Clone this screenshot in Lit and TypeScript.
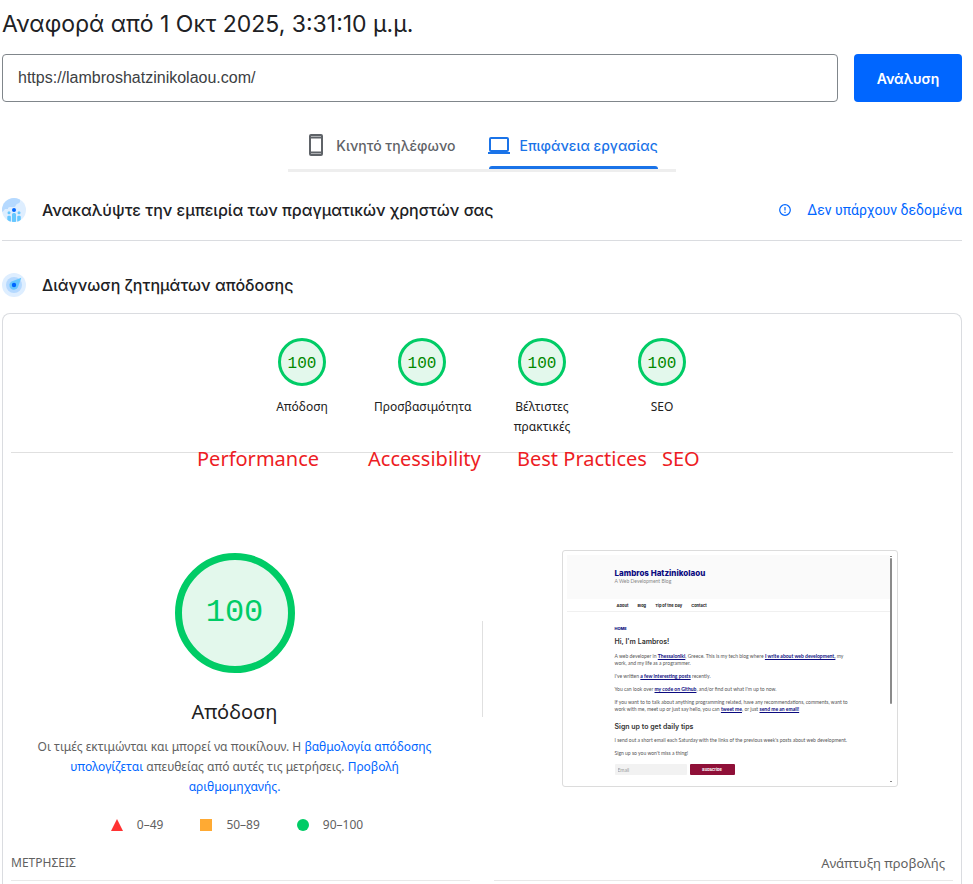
import { LitElement, html, css, svg } from "lit";
import { customElement, property } from "lit/decorators.js";

@customElement("score-gauge")
class ScoreGauge extends LitElement {
  @property({ type: Number }) score = 100;
  @property({ type: Boolean, reflect: true }) large = false;

  static styles = css`
    :host { display: block; width: 48px; height: 48px; }
    :host([large]) { width: 120px; height: 120px; }
    .ring {
      box-sizing: border-box;
      width: 100%;
      height: 100%;
      padding-top: 3px;
      border: 3px solid #0c6;
      border-radius: 50%;
      background: #e3f8ec;
      color: #080;
      font: 16px/20px "Liberation Mono", monospace;
      display: flex;
      align-items: center;
      justify-content: center;
    }
    :host([large]) .ring {
      padding-top: 0;
      border-width: 7px;
      color: #0c6;
      font-size: 32px;
      line-height: 40px;
    }
  `;

  render() {
    return html`<div class="ring">${this.score}</div>`;
  }
}

@customElement("site-preview")
class SitePreview extends LitElement {
  static styles = css`
    :host {
      display: block;
      box-sizing: border-box;
      width: 336px;
      border: 1px solid #dcdcdc;
      border-radius: 3px;
      padding: 4px;
      font: 5px/7px Lato, sans-serif;
      color: #555;
    }
    .screen { display: flex; height: 227px; }
    .page { flex: 1; }
    .top { height: 44px; background: #fafafa; padding-left: 48px; box-sizing: border-box; padding-top: 13px; }
    .site { font: 800 8px/11px Inter, sans-serif; color: #0b0b80; }
    .tag { line-height: 5px; color: #888; }
    nav {
      height: 13px;
      box-sizing: border-box;
      border-bottom: 1px solid #f0f0f0;
      padding-left: 50px;
      display: flex;
      gap: 9px;
      align-items: center;
      font: 700 4px/7px Inter, sans-serif;
    }
    nav a { color: #222; text-decoration: none; }
    main { width: 224px; margin-left: 48px; white-space: nowrap; }
    .crumb { margin-top: 13px; font: 800 4px/7px Inter, sans-serif; color: #0b0b80; }
    h2, h3, p { margin: 0; }
    h2, h3 { font: 600 7px/11px Inter, sans-serif; color: #333; }
    h2 { margin: 4px 0 6px; }
    h3 { margin: 8px 0 5px; }
    p + p { margin-top: 6px; }
    p a { color: #0b0b80; font-weight: 700; text-decoration: underline; }
    form { display: flex; gap: 3px; margin-top: 7px; }
    input, button { box-sizing: border-box; height: 11px; border: 0; margin: 0; font: inherit; border-radius: 1px; }
    input { width: 72px; background: #f2f2f2; padding: 0 3px; }
    input::placeholder { color: #999; }
    button { width: 45px; padding: 0; background: #8f1038; color: #fff; font: 700 4px/7px Inter, sans-serif; }
    .scroll { width: 3px; display: flex; flex-direction: column; align-items: center; gap: 1px; padding-top: 1px; box-sizing: border-box; }
    .arrow { width: 2px; height: 1px; background: #888; }
    .thumb { width: 2px; height: 146px; background: #8b8b8b; border-radius: 1px; margin-bottom: auto; }
  `;

  render() {
    return html`
      <div class="screen">
        <div class="page">
          <div class="top">
            <div class="site">Lambros Hatzinikolaou</div>
            <div class="tag">A Web Development Blog</div>
          </div>
          <nav>
            <a href="#about">About</a><a href="#blog">Blog</a><a href="#tips">Tip of the Day</a><a href="#contact">Contact</a>
          </nav>
          <main>
            <div class="crumb">HOME</div>
            <h2>Hi, I'm Lambros!</h2>
            <p>A web developer in <a href="#city">Thessaloniki</a>, Greece. This is my tech blog where <a href="#write">I write about web development,</a> my<br />work, and my life as a programmer.</p>
            <p>I've written <a href="#posts">a few interesting posts</a> recently.</p>
            <p>You can look over <a href="#code">my code on Github</a>, and/or find out what I'm up to now.</p>
            <p>If you want to to talk about anything programming related, have any recommendations, comments, want to<br />work with me, meet up or just say hello, you can <a href="#tweet">tweet me</a>, or just <a href="#mail">send me an email!</a></p>
            <h3>Sign up to get daily tips</h3>
            <p>I send out a short email each Saturday with the links of the previous week's posts about web development.</p>
            <p>Sign up so you won't miss a thing!</p>
            <form>
              <input type="email" placeholder="Email" aria-label="Email" />
              <button type="button">Subscribe</button>
            </form>
          </main>
        </div>
        <div class="scroll"><i class="arrow"></i><i class="thumb"></i><i class="arrow"></i></div>
      </div>
    `;
  }
}

const phoneIcon = svg`<svg class="icon" width="24" height="24" viewBox="0 0 24 24" fill="none" stroke="currentColor" stroke-width="2"><rect x="6" y="2" width="12" height="20" rx="1"/><path d="M6 4.500h12M6 19.500h12"/></svg>`;

const laptopIcon = svg`<svg class="icon" width="24" height="24" viewBox="0 0 24 24" fill="none" stroke="currentColor" stroke-width="2"><rect x="3" y="5" width="18" height="13" rx="1"/><path d="M1 20h22"/></svg>`;

const peopleIcon = svg`<svg width="24" height="24" viewBox="0 0 24 24">
  <defs><clipPath id="disc"><circle cx="12" cy="12" r="12"/></clipPath></defs>
  <g clip-path="url(#disc)">
    <path fill="#deeeff" d="M0 0h24v24H0z"/>
    <path fill="#b5d9ff" d="M0 14V0h18v4c-1 2-3 1-4 3s-1 2-3 2H8c-2 0-2 1-2 2H3c-1 1-1 2-3 3z"/>
    <path fill="#66c7ff" d="M10 16.500a1.500 1.500 0 0 1 1.500-1.500h1a1.500 1.500 0 0 1 1.500 1.500V24h-4zM5.300 19a1.300 1.300 0 0 1 1.300-1.300h1A1.300 1.300 0 0 1 8.900 19v5H5.300zM15.200 19a1.300 1.300 0 0 1 1.300-1.300h1a1.300 1.300 0 0 1 1.300 1.300v5h-3.600z"/>
    <circle fill="#66c7ff" cx="7" cy="14.700" r="1.500"/><circle fill="#66c7ff" cx="17" cy="14.700" r="1.500"/>
    <circle fill="#06f" cx="12" cy="12" r="2"/>
  </g></svg>`;

const compassIcon = svg`<svg width="24" height="24" viewBox="0 0 24 24">
  <circle cx="12" cy="12" r="12" fill="#deeeff"/><circle cx="12" cy="12" r="8" fill="#b5d9ff"/>
  <path d="M19.300 4.700 16 14a4.500 4.500 0 1 1-6.500-5.600z" fill="#66c7ff"/>
  <circle cx="12" cy="12" r="2.200" fill="#06f"/></svg>`;

const infoIcon = svg`<svg width="12" height="12" viewBox="0 0 12 12" fill="none" stroke="currentColor" stroke-width="1.200"><circle cx="6" cy="6" r="5.300"/><path d="M6 3v3.600M6 7.800V9"/></svg>`;

@customElement("app-root")
class AppRoot extends LitElement {
  static styles = css`
    :host {
      display: flex;
      flex-direction: column;
      box-sizing: border-box;
      min-height: 100vh;
      padding: 0 11px 0 2px;
      background: #fff;
      color: #212121;
      font: 12px/20px "Noto Sans", sans-serif;
    }
    h1, h2, p { margin: 0; }
    a { color: #06f; text-decoration: none; }
    svg { display: block; flex: none; }

    h1 { font: 400 23px/48px Inter, sans-serif; color: #202124; }
    .search { display: flex; gap: 16px; margin-top: 6px; }
    .search input {
      flex: 1;
      min-width: 0;
      box-sizing: border-box;
      height: 48px;
      padding: 0 15px;
      border: 1px solid #80868b;
      border-radius: 4px;
      font: 16px "Liberation Sans", sans-serif;
      color: #3c4043;
    }
    .search button {
      width: 108px;
      border: 0;
      border-radius: 4px;
      background: #06f;
      color: #fff;
      font: 600 14px Inter, sans-serif;
    }

    .tabs {
      align-self: center;
      display: flex;
      gap: 32px;
      margin-top: 22px;
      padding: 0 18px 0 16px;
      border-bottom: 3px solid #eee;
    }
    .tab {
      display: flex;
      align-items: center;
      gap: 8px;
      height: 45px;
      padding: 0 0 3px;
      border: 0;
      background: none;
      color: #5f6368;
      font: 500 14px Inter, sans-serif;
      position: relative;
    }
    .tab.active { color: #1a73e8; }
    .tab.active::after {
      content: "";
      position: absolute;
      left: 2px;
      right: 0;
      bottom: 0;
      height: 3px;
      border-radius: 3px 3px 0 0;
      background: #1a73e8;
    }

    .section { display: flex; align-items: center; gap: 16px; }
    .section h2 { font: 500 16px/24px Inter, sans-serif; color: #202124; }
    .real { height: 60px; margin-top: 8px; border-bottom: 1px solid #dadce0; }
    .diagnose { height: 56px; margin-top: 16px; }
    .nodata { margin-left: auto; display: flex; align-items: center; gap: 16px; font: 14px/20px Roboto, sans-serif; }

    .card {
      flex: 1;
      border: 1px solid #dadce0;
      border-bottom: 0;
      border-radius: 8px 8px 0 0;
      padding-top: 24px;
    }
    .scores {
      position: relative;
      display: flex;
      justify-content: center;
      margin: 0 8px;
      padding-bottom: 15px;
      border-bottom: 1px solid #e0e0e0;
    }
    .score {
      width: 120px;
      display: flex;
      flex-direction: column;
      align-items: center;
      gap: 11px;
      text-align: center;
      color: #212121;
    }
    .score span { width: 96px; }
    .notes {
      position: absolute;
      top: 106px;
      left: 0;
      right: 0;
      display: grid;
      grid-template-columns: 171px 149px 145px 105px;
      justify-content: center;
      color: #ed1c24;
      font-size: 20px;
      line-height: 30px;
      white-space: nowrap;
    }

    .overview {
      display: grid;
      grid-template-columns: 1fr 1fr;
      column-gap: 32px;
      margin-top: 50px;
      position: relative;
      align-items: center;
      justify-items: center;
    }
    .overview::before {
      content: "";
      position: absolute;
      left: 50%;
      top: calc(50% - 48px);
      height: 96px;
      border-left: 1px solid #e0e0e0;
    }
    .category {
      padding-top: 50px;
      display: flex;
      flex-direction: column;
      align-items: center;
      text-align: center;
      color: #616161;
    }
    .category h2 { margin-top: 25px; font-size: 20px; line-height: 28px; font-weight: 400; color: #212121; }
    .category p { margin-top: 11px; }
    .legend { display: flex; gap: 37px; margin-top: 19px; padding-left: 5px; line-height: 18px; }
    .legend span { display: flex; align-items: center; gap: 14px; }
    .metrics { display: grid; grid-template-columns: 1fr 1fr; column-gap: 24px; margin: 19px 8px 0; color: #616161; }
    .metrics > * { border-bottom: 1px solid #e8e8e8; padding-bottom: 7px; }
    .metrics h2 { font-size: 12px; line-height: 20px; font-weight: 400; }
    .expand { text-align: right; padding-right: 8px; line-height: 20px; }
    .expand button { border: 0; padding: 0; background: none; color: inherit; font: 13px/20px "Noto Sans", sans-serif; vertical-align: top; }
  `;

  private categories = ["Απόδοση", "Προσβασιμότητα", "Βέλτιστες πρακτικές", "SEO"];
  private notes = ["Performance", "Accessibility", "Best Practices", "SEO"];

  render() {
    return html`
      <h1>Αναφορά από 1 Οκτ 2025, 3:31:10 μ.μ.</h1>
      <form class="search">
        <input type="text" value="https://lambroshatzinikolaou.com/" aria-label="URL" />
        <button type="button">Ανάλυση</button>
      </form>
      <div class="tabs" role="tablist">
        <button class="tab" role="tab" aria-selected="false">${phoneIcon}Κινητό τηλέφωνο</button>
        <button class="tab active" role="tab" aria-selected="true">${laptopIcon}Επιφάνεια εργασίας</button>
      </div>
      <div class="section real">
        ${peopleIcon}
        <h2>Ανακαλύψτε την εμπειρία των πραγματικών χρηστών σας</h2>
        <a class="nodata" href="#nodata">${infoIcon}Δεν υπάρχουν δεδομένα</a>
      </div>
      <div class="section diagnose">
        ${compassIcon}
        <h2>Διάγνωση ζητημάτων απόδοσης</h2>
      </div>
      <div class="card">
        <div class="scores">
          ${this.categories.map(
            (name) => html`<div class="score"><score-gauge score="100"></score-gauge><span>${name}</span></div>`
          )}
          <div class="notes">${this.notes.map((note) => html`<span>${note}</span>`)}</div>
        </div>
        <div class="overview">
          <div class="category">
            <score-gauge large score="100"></score-gauge>
            <h2>Απόδοση</h2>
            <p>
              Οι τιμές εκτιμώνται και μπορεί να ποικίλουν. Η
              <a href="#scoring">βαθμολογία απόδοσης<br />υπολογίζεται</a> απευθείας από αυτές τις μετρήσεις.
              <a href="#calculator">Προβολή<br />αριθμομηχανής.</a>
            </p>
            <div class="legend">
              <span><svg width="12" height="12"><path d="M6 0l6 12H0z" fill="#f33" /></svg>0–49</span>
              <span><svg width="12" height="12"><path d="M0 0h12v12H0z" fill="#fa3" /></svg>50–89</span>
              <span><svg width="12" height="12"><circle cx="6" cy="6" r="6" fill="#0c6" /></svg>90–100</span>
            </div>
          </div>
          <site-preview></site-preview>
        </div>
        <div class="metrics">
          <h2>ΜΕΤΡΗΣΕΙΣ</h2>
          <div class="expand"><button type="button">Ανάπτυξη προβολής</button></div>
        </div>
      </div>
    `;
  }
}
